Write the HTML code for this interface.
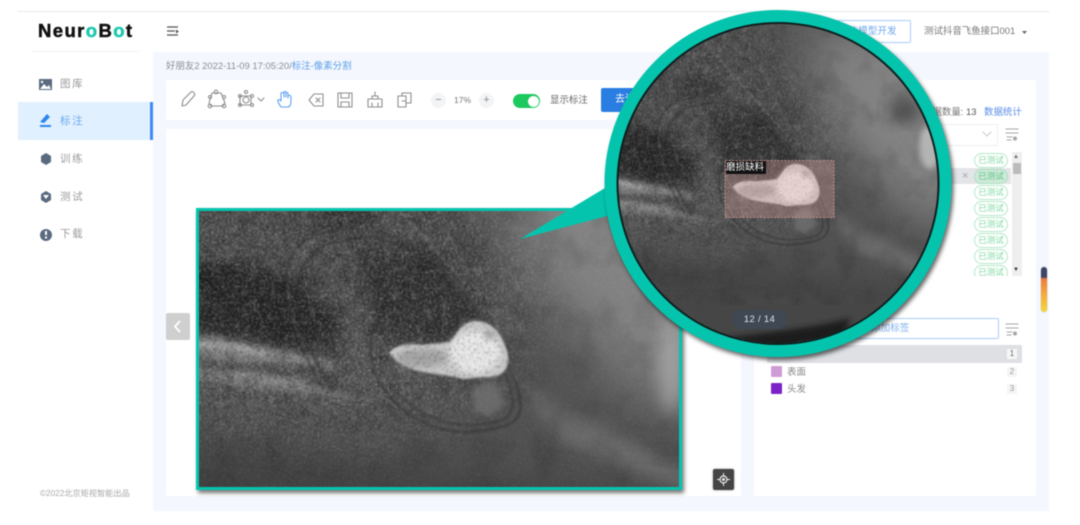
<!DOCTYPE html>
<html><head><meta charset="utf-8"><style>
*{box-sizing:border-box}
html,body{margin:0;padding:0;width:1080px;height:525px;overflow:hidden;background:#fff}
#r{position:relative;width:1080px;height:525px;overflow:hidden;background:#fff;filter:blur(.45px);font-family:"Liberation Sans","Noto Sans CJK SC",sans-serif}
#r div,#r span.a{position:absolute;white-space:nowrap}
.t{font-size:9.45px;line-height:14px}
.nav{left:60px;font-size:10.5px;letter-spacing:1.6px;color:#9a9a9a;line-height:14px}
.tag{left:974px;width:34px;height:15px;border:1px solid #b5e8c8;border-radius:8px;color:#82d8a2;font-size:8.5px;line-height:13px;text-align:center;background:#fff}
.bd{left:1007px;width:10px;height:10px;background:#f5f5f6;color:#999;font-size:8px;line-height:10px;text-align:center}
</style></head><body><div id="r">
<div style="left:18px;top:11px;width:1031px;height:1px;background:#e8eaed"></div>
<div style="left:153px;top:52px;width:896px;height:459px;background:#f4f7fe"></div>
<div style="left:32px;top:51px;width:107px;height:1px;background:#f0f0f0"></div>
<div style="left:38px;top:20px;font:bold 18.5px/22px 'Liberation Sans',sans-serif;letter-spacing:1.4px;color:#111;-webkit-text-stroke:.5px #111">Neur<span style="color:#1bc8ae;-webkit-text-stroke:.5px #1bc8ae">o</span>B<span style="color:#1bc8ae;-webkit-text-stroke:.5px #1bc8ae">o</span>t</div>

<div style="left:18px;top:102px;width:135px;height:38px;background:#e1f0ff"></div>
<div style="left:150px;top:102px;width:3px;height:38px;background:#3f8cf0"></div>
<div class="nav" style="top:77px">图库</div>
<div class="nav" style="top:114px;color:#6aa9ee">标注</div>
<div class="nav" style="top:152px">训练</div>
<div class="nav" style="top:190px">测试</div>
<div class="nav" style="top:227px">下载</div>
<div style="left:40px;top:488px;font-size:8.2px;line-height:12px;color:#a8a8a8">©2022北京矩视智能出品</div>

<div class="t" style="left:166px;top:60px;color:#8b8f96">好朋友2 2022-11-09 17:05:20/<span style="color:#5b9fe8">标注-像素分割</span></div>

<div style="left:166px;top:80px;width:575px;height:40px;background:#fff"></div>
<div style="left:166px;top:129px;width:575px;height:367px;background:#fff"></div>
<div style="left:754px;top:80px;width:282px;height:416px;background:#fff"></div>

<div style="left:513px;top:94px;width:27px;height:14px;border-radius:7px;background:#1bc95f"></div>
<div style="left:528px;top:95.5px;width:11px;height:11px;border-radius:50%;background:#fff"></div>
<div class="t" style="left:550px;top:94px;color:#666">显示标注</div>
<div style="left:601px;top:88px;width:50px;height:24px;border-radius:2px;background:#2a7de1;color:#fff;font-size:10px;line-height:24px;padding-left:14px">去训练</div>
<div style="left:431px;top:93px;width:15px;height:15px;border-radius:50%;background:#f3f4f5;color:#888;font-size:11px;line-height:14px;text-align:center">−</div>
<div style="left:479px;top:93px;width:15px;height:15px;border-radius:50%;background:#f3f4f5;color:#888;font-size:11px;line-height:14px;text-align:center">+</div>
<div style="left:454px;top:94px;font-size:8.5px;line-height:13px;color:#777">17%</div>

<div style="left:790px;top:20px;width:121px;height:23px;border:1px solid #a8cdf8;border-radius:2px;color:#6aa7ec;font-size:9.6px;line-height:22px;padding-left:48px">智能模型开发</div>
<div class="t" style="left:924px;top:24.500px;color:#777">测试抖音飞鱼接口001</div>

<div class="t" style="left:923px;top:106px;color:#777">数据数量: <span style="color:#555">13</span></div>
<div class="t" style="left:984px;top:106px;color:#5b8fe8">数据统计</div>
<div style="left:790px;top:124px;width:208px;height:22px;border:1px solid #eceef0;border-radius:2px"></div>
<div style="left:790px;top:168px;width:221px;height:16px;background:#e3e5e8"></div>
<div style="left:1012px;top:152px;width:10px;height:124px;background:#eee"></div>
<div style="left:1013px;top:163px;width:8px;height:11px;background:#bbb"></div>
<div style="left:1013px;top:152px;font-size:6px;line-height:10px;color:#666">▲</div>
<div style="left:1013px;top:265px;font-size:6px;line-height:10px;color:#333">▼</div>
<div style="left:962px;top:169px;font-size:11px;line-height:14px;color:#9aa">×</div>
<div style="left:960px;top:152px;width:52px;height:124px;overflow:hidden">
<div class="tag" style="left:14px;top:1px">已测试</div>
<div class="tag" style="left:14px;top:17px;background:#cfe9d9;color:#5cc587;border-color:#a9e0bd">已测试</div>
<div class="tag" style="left:14px;top:33px">已测试</div>
<div class="tag" style="left:14px;top:49px">已测试</div>
<div class="tag" style="left:14px;top:65px">已测试</div>
<div class="tag" style="left:14px;top:81px">已测试</div>
<div class="tag" style="left:14px;top:97px">已测试</div>
<div class="tag" style="left:14px;top:113px">已测试</div>
</div>

<div style="left:790px;top:318px;width:209px;height:21px;border:1px solid #a8cdf8;border-radius:2px;color:#7eb0ee;font-size:9.6px;line-height:20px;padding-left:80px">添加标签</div>
<div style="left:767px;top:345px;width:255px;height:18px;background:#dee0e4;border-radius:1px"></div>
<div class="bd" style="top:349px;background:#f6f6f6;color:#666">1</div>
<div style="left:771px;top:366px;width:11px;height:11px;background:#cf9dd6;border-radius:1px"></div>
<div class="t" style="left:787px;top:365.500px;color:#888">表面</div>
<div class="bd" style="top:367px">2</div>
<div style="left:771px;top:383px;width:11px;height:11px;background:#7d22c9;border-radius:1px"></div>
<div class="t" style="left:787px;top:382.500px;color:#888">头发</div>
<div class="bd" style="top:384px">3</div>

<div style="left:1041px;top:267px;width:6px;height:45px;border-radius:3px;background:linear-gradient(#3d4466 0 10px,#f07b3c 12px,#f5a63c 26px,#f2d83a);box-shadow:0 0 1px #888"></div>
<div style="left:166px;top:313px;width:24px;height:27px;background:#cfcfcf;border-radius:2px"></div>
<div style="left:713px;top:469px;width:21px;height:21px;background:#444;border-radius:2px;box-shadow:0 0 2px #999"></div>

<svg width="1080" height="525" viewBox="0 0 1080 525" style="position:absolute;left:0;top:0">
<defs>
<filter id="b3" x="-30%" y="-30%" width="160%" height="160%"><feGaussianBlur stdDeviation="3"/></filter>
<filter id="b8" x="-40%" y="-40%" width="180%" height="180%"><feGaussianBlur stdDeviation="8"/></filter>
<filter id="b16" x="-50%" y="-50%" width="200%" height="200%"><feGaussianBlur stdDeviation="16"/></filter>
<filter id="b30" x="-60%" y="-60%" width="220%" height="220%"><feGaussianBlur stdDeviation="30"/></filter>
<filter id="b1"><feGaussianBlur stdDeviation="1"/></filter>
<filter id="noise" x="0" y="0" width="100%" height="100%" color-interpolation-filters="sRGB"><feTurbulence type="fractalNoise" baseFrequency=".5" numOctaves="2" seed="4"/><feColorMatrix values="0 0 0 0 1 0 0 0 0 1 0 0 0 0 1 2 0 0 0 -.95"/><feGaussianBlur stdDeviation=".6"/></filter>
<filter id="noised" x="0" y="0" width="100%" height="100%" color-interpolation-filters="sRGB"><feTurbulence type="fractalNoise" baseFrequency=".35" numOctaves="2" seed="9"/><feColorMatrix values="0 0 0 0 0 0 0 0 0 0 0 0 0 0 0 0 2 0 0 -.95"/><feGaussianBlur stdDeviation=".6"/></filter>
<filter id="coarse" x="0" y="0" width="100%" height="100%" color-interpolation-filters="sRGB"><feTurbulence type="fractalNoise" baseFrequency=".12" numOctaves="3" seed="6"/><feColorMatrix values="0 0 0 0 1 0 0 0 0 1 0 0 0 0 1 3.2 0 0 0 -1.6"/></filter>
<filter id="coarsed" x="0" y="0" width="100%" height="100%" color-interpolation-filters="sRGB"><feTurbulence type="fractalNoise" baseFrequency=".08" numOctaves="3" seed="14"/><feColorMatrix values="0 0 0 0 0 0 0 0 0 0 0 0 0 0 0 3.2 0 0 0 -1.6"/></filter>
<filter id="cloud" x="0" y="0" width="100%" height="100%" color-interpolation-filters="sRGB"><feTurbulence type="fractalNoise" baseFrequency=".03" numOctaves="3" seed="3"/><feColorMatrix values="0 0 0 0 0 0 0 0 0 0 0 0 0 0 0 2 0 0 0 -.9"/></filter>
<linearGradient id="bg" x1="0" y1="0" x2="1" y2="1"><stop offset="0" stop-color="#585858"/><stop offset="1" stop-color="#4c4c4c"/></linearGradient>
<mask id="nm" maskUnits="userSpaceOnUse" x="100" y="60" width="720" height="460"><path d="M150 110H420L530 290 500 400 340 440 150 420Z" fill="#fff" filter="url(#b30)"/></mask>
<clipPath id="c1"><rect x="197" y="209" width="484" height="280"/></clipPath>
<clipPath id="c2"><circle cx="778" cy="183" r="160"/></clipPath>
<clipPath id="blobc"><path d="M389 353L408 343 450 342 463 323 481 320 501 337 508 363 494 377 463 379 436 373 405 368Z"/></clipPath>
<g id="art">
<rect x="100" y="60" width="720" height="460" fill="url(#bg)"/>
<path d="M490 140L700 140 700 410 640 395 530 280Z" fill="#828282" filter="url(#b30)"/>
<path d="M520 385L700 480 690 495 560 440Z" fill="#6a6a6a" filter="url(#b8)"/>
<path d="M170 430L700 500V520H170Z" fill="#434343" filter="url(#b16)"/>
<path d="M190 130H420L500 280 470 330 350 300 190 270Z" fill="#4b4b4b" filter="url(#b8)"/>
<path d="M190 270L250 262 310 290 345 320 330 350 260 346 190 330Z" fill="#282828" filter="url(#b8)"/>
<path d="M196 262L235 268 220 292 196 288Z" fill="#222" filter="url(#b3)"/>
<path d="M300 205H370L375 226 320 230Z" fill="#343434" filter="url(#b8)"/>
<path d="M355 250L440 250 480 315 440 345 375 335Z" fill="#333" filter="url(#b8)"/>
<path d="M190 336C240 340 285 350 340 366L195 358Z" fill="#828282" filter="url(#b3)"/>
<path d="M195 344C220 345 240 348 262 353" stroke="#bcbcbc" stroke-width="3" fill="none" filter="url(#b3)"/>
<path d="M190 364C240 372 300 380 375 402L190 380Z" fill="#737373" filter="url(#b3)"/>
<path d="M230 373L305 384" stroke="#a8a8a8" stroke-width="2.500" fill="none" filter="url(#b3)"/>
<rect x="100" y="60" width="720" height="460" filter="url(#cloud)" opacity=".14"/>
<rect x="100" y="60" width="720" height="460" filter="url(#coarse)" mask="url(#nm)" opacity=".12"/>
<rect x="100" y="60" width="720" height="460" filter="url(#coarsed)" mask="url(#nm)" opacity=".2"/>
<rect x="100" y="60" width="720" height="460" filter="url(#noise)" mask="url(#nm)" opacity=".4"/>
<rect x="100" y="60" width="720" height="460" filter="url(#noised)" mask="url(#nm)" opacity=".4"/>
<rect x="100" y="60" width="720" height="460" filter="url(#noise)" opacity=".1"/>
<path d="M330 130L470 290" stroke="#999" stroke-width="3" stroke-dasharray="5 3" opacity=".3" filter="url(#b1)"/>
<g fill="none" stroke="#7b7b7b" stroke-opacity=".35" filter="url(#b1)" transform="translate(2 1)">
<path d="M330 232C290 235 258 280 323 388" stroke-width="1.500"/>
<path d="M330 232C400 215 470 275 515 380" stroke-width="1.500"/>
</g>
<g fill="none" stroke="#222" stroke-opacity=".45" filter="url(#b1)">
<path d="M330 232C290 235 258 280 323 388" stroke-width="2.200"/>
<path d="M340 240C300 250 272 290 333 392" stroke-width="2.200"/>
<path d="M330 232C400 215 470 275 515 380 528 420 520 428 465 432 410 430 385 395 373 370 368 340 372 322 380 322" stroke-width="2.200"/>
<path d="M345 240C410 225 465 285 510 385 518 418 510 424 465 425 420 422 392 392 380 368" stroke-width="1.800"/>
</g>
<path d="M472 388L495 382 505 405 490 416 475 412Z" fill="#747474" filter="url(#b3)" opacity=".7"/>
<path d="M389 353C395 345 408 343 422 345L450 342C456 335 461 324 470 322 481 318 494 325 501 337 507 348 510 358 507 366 504 375 494 378 484 377L463 379C450 375 438 375 425 372 412 370 398 364 389 353Z" fill="#c9c9c9" filter="url(#b1)"/>
<ellipse cx="422" cy="358" rx="26" ry="9" fill="#a6a6a6" filter="url(#b3)"/>
<ellipse cx="475" cy="352" rx="25" ry="21" fill="#e8e8e8" filter="url(#b3)"/>
<ellipse cx="490" cy="335" rx="6" ry="5" fill="#a8a8a8" filter="url(#b3)"/>
<rect x="380" y="318" width="135" height="65" filter="url(#noised)" opacity=".3" clip-path="url(#blobc)"/>
</g>
</defs>

<rect x="196" y="208" width="486" height="282" fill="#666" style="filter:drop-shadow(2px 3px 2px rgba(0,0,0,.55))"/>
<g clip-path="url(#c1)"><use href="#art"/>
<ellipse cx="672" cy="365" rx="14" ry="50" fill="#b0b0b0" filter="url(#b8)" opacity=".7"/>
</g>
<rect x="197.500" y="209.500" width="483" height="279" fill="none" stroke="#04c4ad" stroke-width="3"/>

<path d="M520 239L610 185 622 212Z" fill="#04c4ad"/>
<circle cx="778" cy="183.500" r="167" fill="none" stroke="#04c4ad" stroke-width="13" style="filter:drop-shadow(2px 3px 2px rgba(0,0,0,.6))"/>
<g clip-path="url(#c2)">
<g transform="translate(448.500 -70.500) scale(.73)"><use href="#art"/></g>
<rect x="600" y="305" width="360" height="45" fill="#464646"/>
<ellipse cx="930" cy="147" rx="11" ry="22" fill="#c2c2c2" filter="url(#b3)" opacity=".8"/>
<ellipse cx="905" cy="110" rx="16" ry="12" fill="#333" filter="url(#b8)" opacity=".7"/>
<path d="M690 345C740 333 800 332 850 318L840 350H690Z" fill="#1d1d1d" filter="url(#b3)"/>
<rect x="725" y="160.500" width="109" height="57" fill="#e8a9a5" fill-opacity=".3" stroke="#d49a96" stroke-width=".8" stroke-dasharray="2 1.500"/>
</g>
<circle cx="778" cy="183.500" r="160.500" fill="none" stroke="#0f1f1f" stroke-width="2"/>

<g fill="none" stroke="#8f8f8f" stroke-width="1.100" stroke-linejoin="round" stroke-linecap="round">
<path d="M182 106L183 100 191 92C192 91 194 92 194 93 195 94 195 95 194 96L186 105Z"/>
<path d="M212 93H221L225 103 223 106H211L209 103Z"/><circle cx="216" cy="92" r="1.800"/><circle cx="210" cy="106" r="1.800"/><circle cx="224" cy="106" r="1.800"/><circle cx="210" cy="97" r="1.500"/><circle cx="224" cy="97" r="1.500"/>
<path d="M240 96H251V105H240Z"/><circle cx="246" cy="100" r="3"/><circle cx="246" cy="92" r="1.500"/><circle cx="240" cy="96" r="1.500"/><circle cx="252" cy="96" r="1.500"/><circle cx="240" cy="105" r="1.500"/><circle cx="252" cy="105" r="1.500"/>
<path d="M258 98L261 101 264 98"/>
<path d="M309 100L314 94H323V106H314Z"/><path d="M316 98L320 102M320 98L316 102"/>
<path d="M338 93H352V107H338Z"/><path d="M341 93V98H349V93M341 107V102H349V107"/>
<path d="M368 99H382V107H368Z"/><path d="M372 99V96H378V99M375 96V92M372 107V103M378 107V103"/>
<path d="M398 96H406V107H398Z"/><path d="M402 96V93H411V103H406M406 101H402"/>
<path d="M1006 129H1018M1006 133H1018M1007 137H1012M1007 140H1011" stroke="#a5a5a5"/><circle cx="1015" cy="138.500" r="2" fill="#a5a5a5" stroke="none"/>
<path d="M1006 324H1018M1006 328H1018M1007 332H1012M1007 335H1011" stroke="#a5a5a5"/><circle cx="1015" cy="333.500" r="2" fill="#a5a5a5" stroke="none"/>
<path d="M983 132L987 136 991 132" stroke="#ccc"/>
</g>
<path d="M281 107C279 104 277 101 278 100 279 99 280 100 281 101V94C281 92 283 92 284 94V97 92.500C284 91 286 91 286 93V97 93.500C286 92 288 92 288 94V98 96C288 95 291 95 291 97V101C291 104 290 107 288 107Z" fill="none" stroke="#5fa3ef" stroke-width="1.100" stroke-linejoin="round"/>
<g fill="#5a6b80">
<path d="M39 79H52V90H39Z"/><path d="M40 89L44 84 47 87 49 85 51 89Z" fill="#fff"/><circle cx="42" cy="82" r="1.200" fill="#fff"/>
<path d="M167 27H178M167 31H175M167 35H178" stroke="#555" stroke-width="1.300" fill="none"/><path d="M176 29.500L179 31.500 176 33.500Z" fill="#555"/>
<path d="M40 122L47 114 50 117 44 123ZM40 125H51V127H40Z" fill="#2f86ee"/>
<path d="M46 153L51 156V162L46 165 41 162V156Z"/>
<path d="M46 191L51 194V200L46 203 41 200V194Z"/><path d="M43 195H49L46 199Z" fill="#fff"/>
<circle cx="46" cy="235" r="6"/><path d="M45 231H47V235H45ZM45 236.500H47V238.500H45Z" fill="#fff"/>
</g>
<path d="M1022 31L1027 31 1024.500 34Z" fill="#666"/>
<path d="M180 321L175 326.500 180 332" fill="none" stroke="#fff" stroke-width="1.800"/>
<g fill="none" stroke="#eee"><circle cx="723.500" cy="479.500" r="3.500" stroke-width="1.200"/><path d="M723.500 473V476M723.500 483V486M717 479.500H720M727 479.500H730" stroke-width="1"/></g><circle cx="723.500" cy="479.500" r="1.500" fill="#eee"/>
</svg>

<div style="left:726px;top:161px;width:40px;height:13px;background:#111;color:#fff;font-size:9.5px;line-height:13px">磨损缺料</div>
<div style="left:732px;top:310px;width:55px;height:19px;border-radius:10px;background:#3f4853;color:#dfe2e5;font-size:9.5px;line-height:19px;text-align:center;letter-spacing:.3px">12 / 14</div>
</div></body></html>
